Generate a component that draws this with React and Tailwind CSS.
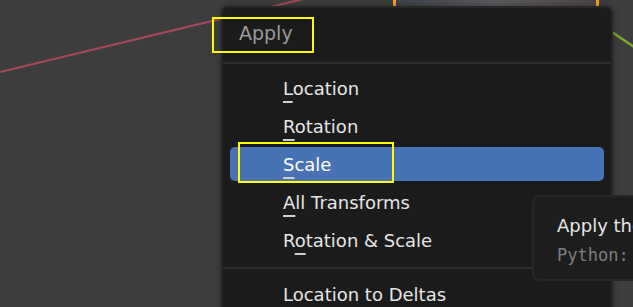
const items = [
    { label: "Location", key: 0 },
    { label: "Rotation", key: 0 },
    { label: "Scale", key: 0, active: true },
    { label: "All Transforms", key: 0 },
    { label: "Rotation & Scale", key: 1 },
];

const MenuLabel = ({ label, k }) => (
    <span>
        {label.slice(0, k)}
        <span className="underline decoration-2 underline-offset-[6px] decoration-[#cfcfcf]">{label[k]}</span>
        {label.slice(k + 1)}
    </span>
);

const Viewport = () => (
    <svg className="absolute inset-0" width="633" height="307" viewBox="0 0 633 307">
        <defs>
            <linearGradient id="obj" x1="0" y1="0" x2="1" y2="0">
                <stop offset="0" stopColor="#3c4048" />
                <stop offset="0.5" stopColor="#5c5a5e" />
                <stop offset="1" stopColor="#4a4447" />
            </linearGradient>
        </defs>
        <line x1="0" y1="72" x2="320" y2="-5" stroke="#a8475a" strokeWidth="2" />
        <line x1="563" y1="-1" x2="640" y2="51" stroke="#78a62c" strokeWidth="2.5" />
        <rect x="394.5" y="-20" width="203" height="40" fill="url(#obj)" stroke="#ff9f1a" strokeWidth="3" />
    </svg>
);

export default function App() {
    return (
        <div className="relative w-[633px] h-[307px] overflow-hidden bg-[#3d3d3d] font-['DejaVu_Sans',sans-serif]">
            <Viewport />

            <div className="absolute left-[221px] top-[6px] w-[392px] h-[320px] rounded-[7px] bg-[#1b1b1b] border-2 border-[#262626] shadow-[0_0_6px_rgba(0,0,0,0.35)]">
                <div className="h-[54px] flex items-center pl-[16px] pb-[4px] text-[19px] text-[#9a9a9a]">Apply</div>
                <div className="h-[2px] bg-[#2d2d2d]" />
                <div className="pt-[5px]">
                    {items.map((it) => (
                        <div key={it.label} className="h-[38px] py-[2px] px-[7px]">
                            <div
                                className={
                                    "h-full flex items-center pl-[53px] text-[18px] rounded-[5px] " +
                                    (it.active ? "bg-[#4772b3] text-white" : "text-[#e6e6e6]")
                                }
                            >
                                <MenuLabel label={it.label} k={it.key} />
                            </div>
                        </div>
                    ))}
                </div>
                <div className="mt-[8px] h-[2px] bg-[#2d2d2d]" />
                <div className="h-[38px] mt-[6px] flex items-center pl-[60px] text-[18px] text-[#e6e6e6]">
                    Location to Deltas
                </div>
            </div>

            <div className="absolute left-[532px] top-[195px] w-[420px] h-[86px] rounded-[8px] bg-[#1d1d1d] border-2 border-[#262626] pl-[23px] pt-[14px] whitespace-nowrap">
                <div className="text-[18px] leading-[30px] text-[#e6e6e6]">Apply the object's scale transformation to its data</div>
                <div className="text-[17px] leading-[28px] text-[#7d7d7d] font-['DejaVu_Sans_Mono',monospace]">
                    Python: bpy.ops.object.transform_apply(location=False)
                </div>
            </div>

            <div className="absolute left-[212px] top-[17px] w-[102px] h-[36px] border-2 border-[#ffff00]" />
            <div className="absolute left-[238px] top-[142px] w-[156px] h-[41px] border-2 border-[#ffff00]" />
        </div>
    );
}
